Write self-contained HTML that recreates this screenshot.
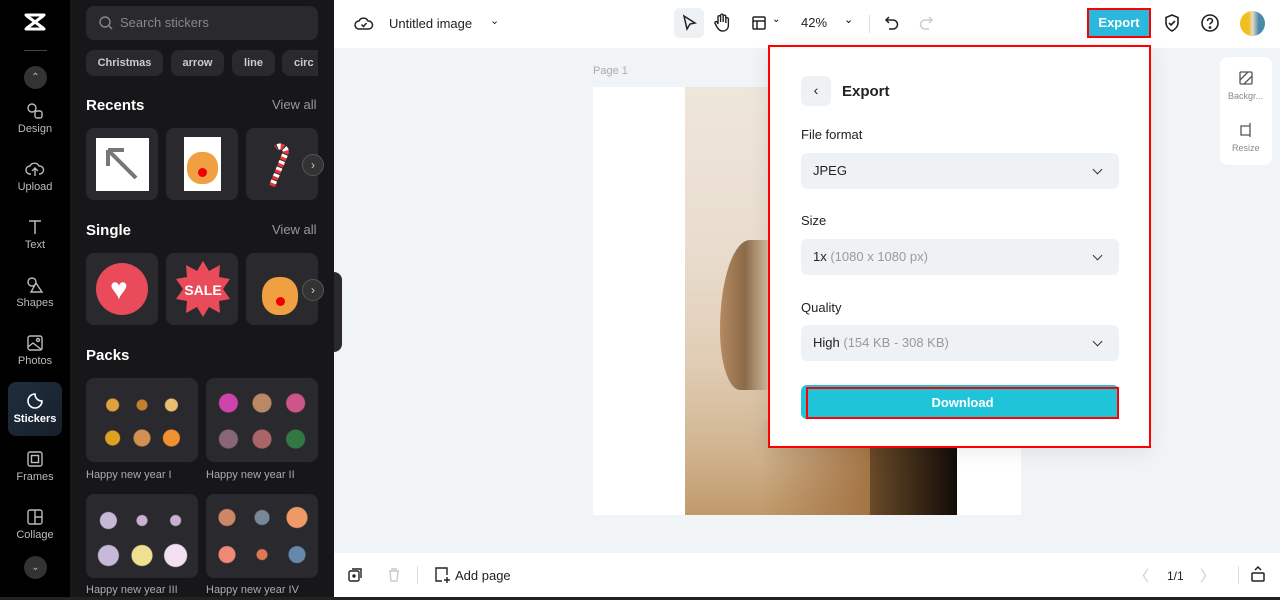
<!DOCTYPE html>
<html><head><meta charset="utf-8"><style>
*{box-sizing:border-box;margin:0;padding:0}
body{width:1280px;height:600px;overflow:hidden;font-family:"Liberation Sans",sans-serif;background:#f1f4f7;position:relative}
.abs{position:absolute}
.rail{left:0;top:0;width:70px;height:600px;background:#000}
.panel{left:70px;top:0;width:264px;height:600px;background:#17171a}
.ri{position:absolute;left:0;width:70px;text-align:center;color:#bbb;font-size:11px}
.ri svg{display:block;margin:0 auto 3px}
.chip{position:absolute;top:50px;height:26px;border-radius:8px;background:#2a2a2e;color:#ccc;font-size:11px;font-weight:bold;line-height:26px;text-align:center}
.h{position:absolute;left:86px;color:#fff;font-weight:bold;font-size:15px}
.va{position:absolute;left:272px;color:#999;font-size:13px}
.tile{position:absolute;width:72px;height:72px;border-radius:8px;background:#2a2a2e}
.pack{position:absolute;width:112px;height:84px;border-radius:8px;background:#2a2a2e}
.pl{position:absolute;color:#aaa;font-size:11px}
.nxt{position:absolute;width:22px;height:22px;border-radius:50%;background:#333;border:1px solid #555;color:#ccc;font-size:12px;text-align:center;line-height:20px}
.lbl{position:absolute;left:801px;font-size:13px;color:#222}
.sel{position:absolute;left:801px;width:318px;height:36px;border-radius:6px;background:#eff2f5;font-size:13px;color:#222;line-height:36px;padding-left:12px}
.sel span{color:#999}
.sel:after{content:"";position:absolute;right:18px;top:13px;width:6px;height:6px;border-right:1.6px solid #333;border-bottom:1.6px solid #333;transform:rotate(45deg)}
</style></head><body>
<div class="abs rail"></div>
<div class="abs panel"></div>
<!-- logo -->
<svg class="abs" style="left:23px;top:12px" width="24" height="20" viewBox="0 0 24 20"><path d="M3 3h18M3 17h18M4 4l16 12M20 4L4 16" stroke="#fff" stroke-width="3" fill="none" stroke-linecap="round"/></svg>
<div class="abs" style="left:24px;top:50px;width:23px;height:1px;background:#444"></div>
<div class="abs" style="left:24px;top:66px;width:23px;height:23px;border-radius:50%;background:#333;color:#bbb;font-size:10px;text-align:center;line-height:23px">⌃</div>
<div class="ri" style="top:102px"><svg width="18" height="18" viewBox="0 0 18 18" fill="none" stroke="#bbb" stroke-width="1.4"><circle cx="6" cy="6" r="4"/><rect x="9" y="9" width="7" height="7" rx="2"/></svg>Design</div>
<div class="ri" style="top:160px"><svg width="20" height="18" viewBox="0 0 20 18" fill="none" stroke="#bbb" stroke-width="1.4"><path d="M6 14H5a4 4 0 010-8 5 5 0 019 0 4 4 0 011 8h-1M10 8v8M7 11l3-3 3 3"/></svg>Upload</div>
<div class="ri" style="top:218px"><svg width="18" height="18" viewBox="0 0 18 18" fill="none" stroke="#bbb" stroke-width="1.5"><path d="M3 3h12M9 3v13"/></svg>Text</div>
<div class="ri" style="top:276px"><svg width="18" height="18" viewBox="0 0 18 18" fill="none" stroke="#bbb" stroke-width="1.4"><circle cx="6" cy="6" r="4"/><path d="M10 7l6 9H5z"/></svg>Shapes</div>
<div class="ri" style="top:334px"><svg width="18" height="18" viewBox="0 0 18 18" fill="none" stroke="#bbb" stroke-width="1.4"><rect x="2" y="2" width="14" height="14" rx="2"/><path d="M2 13l5-4 9 7"/><circle cx="12" cy="6" r="1.5"/></svg>Photos</div>
<div class="abs" style="left:8px;top:382px;width:54px;height:54px;border-radius:8px;background:linear-gradient(135deg,#1f2e3e,#17202b)"></div>
<div class="ri" style="top:392px;color:#fff;font-weight:bold"><svg width="18" height="18" viewBox="0 0 18 18" fill="none" stroke="#fff" stroke-width="1.6"><path d="M16 9a7 7 0 11-7-7c0 4 3 7 7 7z"/></svg>Stickers</div>
<div class="ri" style="top:450px"><svg width="18" height="18" viewBox="0 0 18 18" fill="none" stroke="#bbb" stroke-width="1.4"><rect x="2" y="2" width="14" height="14" rx="2"/><rect x="5.5" y="5.5" width="7" height="7"/></svg>Frames</div>
<div class="ri" style="top:508px"><svg width="18" height="18" viewBox="0 0 18 18" fill="none" stroke="#bbb" stroke-width="1.4"><rect x="2" y="2" width="14" height="14" rx="2"/><path d="M9 2v14M9 9h7"/></svg>Collage</div>
<div class="abs" style="left:24px;top:556px;width:23px;height:23px;border-radius:50%;background:#333;color:#bbb;font-size:10px;text-align:center;line-height:23px">⌄</div>

<!-- panel content -->
<div class="abs" style="left:86px;top:6px;width:232px;height:34px;border-radius:8px;background:#2a2a2e;color:#888;font-size:13px;line-height:34px;padding-left:34px">Search stickers</div>
<svg class="abs" style="left:98px;top:15px" width="16" height="16" viewBox="0 0 16 16" fill="none" stroke="#888" stroke-width="1.4"><circle cx="7" cy="7" r="5"/><path d="M11 11l3 3"/></svg>
<div class="chip" style="left:86px;width:77px">Christmas</div>
<div class="chip" style="left:171px;width:53px">arrow</div>
<div class="chip" style="left:232px;width:43px">line</div>
<div class="chip" style="left:282px;width:36px;border-radius:8px 0 0 8px;text-align:left;padding-left:12px;overflow:hidden">circ</div>
<div class="h" style="top:97px">Recents</div><div class="va" style="top:97px">View all</div>
<div class="tile" style="left:86px;top:128px"><div class="abs" style="left:10px;top:10px;width:53px;height:53px;background:#fff"></div><svg class="abs" style="left:14px;top:14px" width="44" height="44" viewBox="0 0 44 44" fill="none" stroke="#777" stroke-width="4"><path d="M8 8l28 28M8 8v16M8 8h16"/></svg></div>
<div class="tile" style="left:166px;top:128px"><div class="abs" style="left:18px;top:9px;width:37px;height:54px;background:#fff"></div><div class="abs" style="left:21px;top:24px;width:31px;height:32px;border-radius:45%;background:#f0a040"></div><div class="abs" style="left:32px;top:40px;width:9px;height:9px;border-radius:50%;background:#e00"></div></div>
<div class="tile" style="left:246px;top:128px;width:72px"><svg class="abs" style="left:20px;top:8px" width="32" height="56" viewBox="0 0 32 56"><path d="M6 50L20 16a6 6 0 00-10-4" stroke="#e33" stroke-width="6" fill="none" stroke-dasharray="4 3"/><path d="M6 50L20 16a6 6 0 00-10-4" stroke="#fff" stroke-width="6" fill="none" stroke-dasharray="3 4" stroke-dashoffset="4"/></svg></div>
<div class="nxt" style="left:302px;top:154px">›</div>
<div class="h" style="top:222px">Single</div><div class="va" style="top:222px">View all</div>
<div class="tile" style="left:86px;top:253px"><div class="abs" style="left:10px;top:10px;width:52px;height:52px;border-radius:50%;background:#e94b5b"></div><div class="abs" style="left:24px;top:22px;color:#fff;font-size:30px;line-height:30px">♥</div></div>
<div class="tile" style="left:166px;top:253px"><svg class="abs" style="left:8px;top:6px" width="58" height="60" viewBox="0 0 58 60"><polygon fill="#e94b5b" points="29,2 35,12 46,6 45,18 56,20 49,30 56,40 45,42 46,54 35,48 29,58 23,48 12,54 13,42 2,40 9,30 2,20 13,18 12,6 23,12"/><text x="29" y="36" font-size="14" font-weight="bold" fill="#fff" text-anchor="middle" font-family="Liberation Sans">SALE</text></svg></div>
<div class="tile" style="left:246px;top:253px"><div class="abs" style="left:16px;top:24px;width:36px;height:38px;border-radius:45%;background:#f0a040"></div><div class="abs" style="left:30px;top:44px;width:9px;height:9px;border-radius:50%;background:#e00"></div></div>
<div class="nxt" style="left:302px;top:279px">›</div>
<div class="abs" style="left:334px;top:272px;width:8px;height:80px;border-radius:0 8px 8px 0;background:#2a2a2e"></div>
<div class="h" style="top:347px">Packs</div>
<div class="pack" style="left:86px;top:378px"></div>
<div class="pack" style="left:206px;top:378px"></div>
<div class="pl" style="left:86px;top:469px">Happy new year I</div>
<div class="pl" style="left:206px;top:469px">Happy new year II</div>
<div class="pack" style="left:86px;top:494px"></div>
<div class="pack" style="left:206px;top:494px"></div>
<div class="pl" style="left:86px;top:584px">Happy new year III</div>
<div class="pl" style="left:206px;top:584px">Happy new year IV</div>
<div class="abs" style="left:100px;top:390px;width:84px;height:60px;background:radial-gradient(circle at 15% 25%,#e0a040 6px,transparent 7px),radial-gradient(circle at 50% 25%,#c08030 5px,transparent 6px),radial-gradient(circle at 85% 25%,#e8c070 6px,transparent 7px),radial-gradient(circle at 15% 80%,#e0a020 7px,transparent 8px),radial-gradient(circle at 50% 80%,#d09050 8px,transparent 9px),radial-gradient(circle at 85% 80%,#f09030 8px,transparent 9px)"></div>
<div class="abs" style="left:214px;top:386px;width:96px;height:68px;background:radial-gradient(circle at 15% 25%,#c4a 9px,transparent 10px),radial-gradient(circle at 50% 25%,#b86 9px,transparent 10px),radial-gradient(circle at 85% 25%,#c58 9px,transparent 10px),radial-gradient(circle at 15% 78%,#867 9px,transparent 10px),radial-gradient(circle at 50% 78%,#a66 9px,transparent 10px),radial-gradient(circle at 85% 78%,#374 9px,transparent 10px)"></div>
<div class="abs" style="left:94px;top:504px;width:96px;height:66px;background:radial-gradient(circle at 15% 25%,#c8b8d8 8px,transparent 9px),radial-gradient(circle at 50% 25%,#c8b0d0 5px,transparent 6px),radial-gradient(circle at 85% 25%,#c8b0d0 5px,transparent 6px),radial-gradient(circle at 15% 78%,#c8b8d8 10px,transparent 11px),radial-gradient(circle at 50% 78%,#eee090 10px,transparent 11px),radial-gradient(circle at 85% 78%,#f0e0f0 11px,transparent 12px)"></div>
<div class="abs" style="left:212px;top:500px;width:100px;height:70px;background:radial-gradient(circle at 15% 25%,#c86 8px,transparent 9px),radial-gradient(circle at 50% 25%,#789 7px,transparent 8px),radial-gradient(circle at 85% 25%,#e96 10px,transparent 11px),radial-gradient(circle at 15% 78%,#e87 8px,transparent 9px),radial-gradient(circle at 50% 78%,#d75 5px,transparent 6px),radial-gradient(circle at 85% 78%,#68a 8px,transparent 9px)"></div>
<div class="abs" style="left:0;top:597px;width:1280px;height:3px;background:#222"></div>

<!-- top bar -->
<div class="abs" style="left:334px;top:0;width:946px;height:48px;background:#fff"></div>
<svg class="abs" style="left:354px;top:14px" width="20" height="18" viewBox="0 0 20 18" fill="none" stroke="#222" stroke-width="1.5"><path d="M6 15H5a4 4 0 010-8 5 5 0 019 0 4 4 0 011 8H6z"/><path d="M7.5 10.5l2 2 3-3.5"/></svg>
<div class="abs" style="left:389px;top:16px;font-size:13px;color:#222">Untitled image</div>
<div class="abs" style="left:490px;top:14px;font-size:11px;color:#222">⌄</div>
<div class="abs" style="left:674px;top:8px;width:30px;height:30px;border-radius:6px;background:#eef1f4"></div>
<svg class="abs" style="left:681px;top:14px" width="16" height="18" viewBox="0 0 16 18" fill="none" stroke="#222" stroke-width="1.5"><path d="M3 2l11 7-5 1-3 5z"/></svg>
<svg class="abs" style="left:713px;top:13px" width="18" height="20" viewBox="0 0 18 20" fill="none" stroke="#222" stroke-width="1.4"><path d="M5 11V4a1.3 1.3 0 012.6 0v5V2.5a1.3 1.3 0 012.6 0V9V3.5a1.3 1.3 0 012.6 0V10V6a1.3 1.3 0 012.6 0v6c0 4-2.5 6-6 6-3 0-4.5-2-6-5l-1.5-3a1.3 1.3 0 012.3-1z"/></svg>
<svg class="abs" style="left:751px;top:15px" width="16" height="16" viewBox="0 0 16 16" fill="none" stroke="#222" stroke-width="1.5"><rect x="2" y="2" width="12" height="12" rx="1"/><path d="M2 6h12M6 6v8"/></svg>
<div class="abs" style="left:772px;top:14px;font-size:10px">⌄</div>
<div class="abs" style="left:801px;top:15px;font-size:13px;color:#222">42%</div>
<div class="abs" style="left:844px;top:13px;font-size:11px">⌄</div>
<div class="abs" style="left:869px;top:15px;width:1px;height:18px;background:#ddd"></div>
<svg class="abs" style="left:884px;top:14px" width="16" height="18" viewBox="0 0 16 18" fill="none" stroke="#222" stroke-width="1.5"><path d="M5 3L2 6l3 3M2 6h7a4.5 4.5 0 010 9H5"/></svg>
<svg class="abs" style="left:918px;top:14px" width="16" height="18" viewBox="0 0 16 18" fill="none" stroke="#ccc" stroke-width="1.5"><path d="M11 3l3 3-3 3M14 6H7a4.5 4.5 0 000 9h4"/></svg>
<div class="abs" style="left:1087px;top:8px;width:64px;height:30px;background:#2ab8dd;border:2px solid #f00;color:#fff;font-weight:bold;font-size:13px;text-align:center;line-height:26px">Export</div>
<svg class="abs" style="left:1163px;top:13px" width="18" height="20" viewBox="0 0 18 20" fill="none" stroke="#222" stroke-width="1.6"><path d="M9 2l6 2.5v5c0 4-3 7-6 8.5-3-1.5-6-4.5-6-8.5v-5z"/><path d="M6 10l2 2 4-4"/></svg>
<svg class="abs" style="left:1200px;top:13px" width="20" height="20" viewBox="0 0 20 20" fill="none" stroke="#222" stroke-width="1.6"><circle cx="10" cy="10" r="8"/><path d="M7.5 8a2.5 2.5 0 115 0c0 1.5-2.5 2-2.5 3.5"/><circle cx="10" cy="14.5" r=".6" fill="#222"/></svg>
<div class="abs" style="left:1240px;top:11px;width:25px;height:25px;border-radius:50%;background:linear-gradient(90deg,#f0c020 35%,#e8d8c8 50%,#4a8aa8 75%)"></div>

<!-- canvas -->
<div class="abs" style="left:593px;top:65px;font-size:11px;color:#aaa">Page 1</div>
<div class="abs" style="left:593px;top:87px;width:428px;height:428px;background:#fff"></div>
<div class="abs" style="left:685px;top:87px;width:272px;height:428px;background:linear-gradient(180deg,#efe6db 0%,#e8dccd 40%,#e0ccb4 65%,#d0b490 85%,#c09a6a 100%)"></div>
<div class="abs" style="left:720px;top:240px;width:50px;height:150px;border-radius:60% 0 0 40%;background:linear-gradient(90deg,#b48a60,#8a6a48 50%,#d8c4a8)"></div>
<div class="abs" style="left:760px;top:420px;width:120px;height:95px;background:linear-gradient(90deg,rgba(180,140,90,0),#a07040)"></div>
<div class="abs" style="left:870px;top:447px;width:87px;height:68px;background:linear-gradient(90deg,#6a4a28,#120c08)"></div>

<!-- right mini panel -->
<div class="abs" style="left:1220px;top:57px;width:52px;height:108px;border-radius:8px;background:#fff"></div>
<svg class="abs" style="left:1238px;top:70px" width="16" height="16" viewBox="0 0 16 16" fill="none" stroke="#555" stroke-width="1.3"><rect x="2" y="2" width="12" height="12" rx="1"/><path d="M2 10l8-8M6 14l8-8"/></svg>
<div class="abs" style="left:1228px;top:91px;font-size:9px;color:#888">Backgr...</div>
<svg class="abs" style="left:1238px;top:122px" width="16" height="16" viewBox="0 0 16 16" fill="none" stroke="#555" stroke-width="1.3"><path d="M3 4h9v9H3zM12 1v3M12 13v2"/></svg>
<div class="abs" style="left:1232px;top:143px;font-size:9px;color:#888">Resize</div>

<!-- export panel -->
<div class="abs" style="left:768px;top:45px;width:383px;height:403px;background:#fff;border:2px solid #f00;box-shadow:0 4px 20px rgba(0,0,0,.08)"></div>
<div class="abs" style="left:801px;top:76px;width:30px;height:30px;border-radius:6px;background:#eff2f5;text-align:center;line-height:28px;font-size:14px;color:#222">‹</div>
<div class="abs" style="left:842px;top:83px;font-size:15px;font-weight:bold;color:#222">Export</div>
<div class="lbl" style="top:127px">File format</div>
<div class="sel" style="top:153px">JPEG</div>
<div class="lbl" style="top:213px">Size</div>
<div class="sel" style="top:239px">1x <span>(1080 x 1080 px)</span></div>
<div class="lbl" style="top:300px">Quality</div>
<div class="sel" style="top:325px">High <span>(154 KB - 308 KB)</span></div>
<div class="abs" style="left:801px;top:385px;width:318px;height:34px;border-radius:6px;background:#20c4d8"></div>
<div class="abs" style="left:806px;top:387px;width:313px;height:32px;border:2px solid #f00;color:#fff;font-weight:bold;font-size:13px;text-align:center;line-height:28px">Download</div>

<!-- bottom bar -->
<div class="abs" style="left:334px;top:553px;width:946px;height:44px;background:#fff"></div>
<svg class="abs" style="left:347px;top:567px" width="16" height="16" viewBox="0 0 16 16" fill="none" stroke="#222" stroke-width="1.4"><rect x="2" y="4" width="10" height="10" rx="1.5"/><path d="M5 2h9v9"/><circle cx="7" cy="9" r="1" fill="#222"/></svg>
<svg class="abs" style="left:386px;top:567px" width="16" height="16" viewBox="0 0 16 16" fill="none" stroke="#ccc" stroke-width="1.4"><path d="M3 4h10M6 4V2h4v2M4 4l1 10h6l1-10"/></svg>
<div class="abs" style="left:417px;top:566px;width:1px;height:18px;background:#ddd"></div>
<svg class="abs" style="left:433px;top:566px" width="18" height="18" viewBox="0 0 18 18" fill="none" stroke="#222" stroke-width="1.4"><path d="M9 15H3V2h11v7M14 11v6M11 14h6"/></svg>
<div class="abs" style="left:455px;top:568px;font-size:13px;color:#222">Add page</div>
<div class="abs" style="left:1134px;top:565px;font-size:15px;color:#ccc">〈</div>
<div class="abs" style="left:1167px;top:569px;font-size:12px;color:#222">1/1</div>
<div class="abs" style="left:1200px;top:565px;font-size:15px;color:#ccc">〉</div>
<div class="abs" style="left:1238px;top:566px;width:1px;height:18px;background:#ddd"></div>
<svg class="abs" style="left:1250px;top:565px" width="16" height="18" viewBox="0 0 16 18" fill="none" stroke="#222" stroke-width="1.5"><rect x="2" y="8" width="12" height="8" rx="1"/><path d="M5 5l3-3 3 3"/></svg>
</body></html>
